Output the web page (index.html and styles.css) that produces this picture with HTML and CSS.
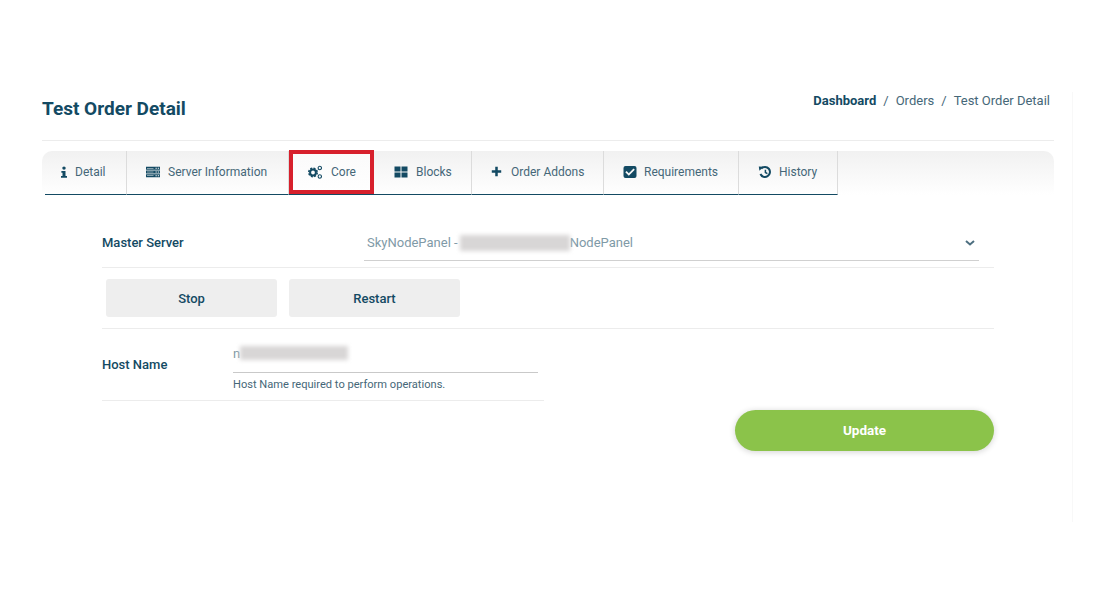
FILE: index.html
```html
<!DOCTYPE html>
<html lang="en">

<head>
    <meta charset="UTF-8">
    <title>Test Order Detail</title>
    <link rel="stylesheet" href="styles.css">
</head>

<body>
    <div class="content">
        <div class="page">
            <div class="page-header">
                <h1>Test Order Detail</h1>
                <div class="breadcrumb">
                    <a class="crumb-root">Dashboard</a>
                    <span class="sep">/</span>
                    <a>Orders</a>
                    <span class="sep">/</span>
                    <span>Test Order Detail</span>
                </div>
            </div>

            <div class="tabs-bar">
                <a class="tab tab-detail">
                    <svg class="icon" viewBox="3 0 10 16"><circle cx="8" cy="2.800" r="2.300"/><path d="M4.500 6.500h5.500v6.800h2v2.400h-8v-2.400h2v-4.400h-1.500z"/></svg>
                    Detail
                </a>
                <a class="tab tab-server">
                    <svg class="icon icon-wide" viewBox="0 0 14 14"><path d="M0 1.800h14v3h-14zM0 5.500h14v3h-14zM0 9.200h14v3h-14z"/><path class="cut" d="M9.500 2.800h1.300v1h-1.300zM11.800 2.800h1.300v1h-1.300zM1 3h6.500v.6h-6.500zM9.500 6.500h1.300v1h-1.300zM11.800 6.500h1.300v1h-1.300zM1 6.700h6.500v.6h-6.500zM9.500 10.200h1.300v1h-1.300zM11.800 10.200h1.300v1h-1.300zM1 10.400h6.500v.6h-6.500z"/></svg>
                    Server Information
                </a>
                <a class="tab tab-core">
                    <svg class="icon icon-wide" viewBox="0 0 14 14"><circle class="teeth" cx="5" cy="7.500" r="4.200"/><circle class="hub" cx="5" cy="7.500" r="2.900"/><circle class="small" cx="11.800" cy="3" r="1.700"/><circle class="small" cx="11.800" cy="11.500" r="1.700"/></svg>
                    Core
                </a>
                <a class="tab tab-blocks">
                    <svg class="icon icon-wide" viewBox="0 0 14 14"><path d="M.5 1.500h6v5h-6zM7.500 1.500h6v5h-6zM.5 7.500h6v5h-6zM7.500 7.500h6v5h-6z"/></svg>
                    Blocks
                </a>
                <a class="tab tab-addons">
                    <svg class="icon icon-plus" viewBox="0 0 14 14"><path d="M5.400 1h3.200v4.400h4.400v3.200h-4.400v4.400h-3.200v-4.400h-4.400v-3.200h4.400z"/></svg>
                    Order Addons
                </a>
                <a class="tab tab-req">
                    <svg class="icon icon-wide" viewBox="0 0 14 14"><path fill-rule="evenodd" d="M2.500 1h9a2 2 0 0 1 2 2v8a2 2 0 0 1-2 2h-9a2 2 0 0 1-2-2v-8a2 2 0 0 1 2-2zM5.800 10.800l6-6-1.300-1.300-4.700 4.700-2.200-2.200-1.300 1.300z"/></svg>
                    Requirements
                </a>
                <a class="tab tab-history">
                    <svg class="icon icon-wide" viewBox="0 0 14 14"><path class="line" d="M3.300 3.500a5 5 0 1 1-.9 5.500"/><path d="M.8 1.500l4.800.3-4.200 4z"/><path class="line thin" d="M7.400 4.700v2.800l2 1.100"/></svg>
                    History
                </a>
            </div>

            <form class="core-form">
                <div class="form-row row-server">
                    <label class="row-label">Master Server</label>
                    <div class="select-box">
                        <span class="select-text">SkyNodePanel - <span class="blur blur-server"></span>NodePanel</span>
                        <svg class="chevron" viewBox="0 0 10 6"><path d="M1 1l4 3.500 4-3.500"/></svg>
                    </div>
                </div>

                <div class="form-row row-actions">
                    <button type="button" class="btn-grey">Stop</button>
                    <button type="button" class="btn-grey">Restart</button>
                </div>

                <div class="form-row row-host">
                    <label class="row-label">Host Name</label>
                    <div class="host-field">
                        <div class="host-input">n<span class="blur blur-host"></span></div>
                        <small>Host Name required to perform operations.</small>
                    </div>
                </div>

                <div class="form-footer">
                    <button type="button" class="btn-update">Update</button>
                </div>
            </form>
        </div>
    </div>
</body>

</html>
```

FILE: styles.css
```css
:root {
    --navy: #134a63;
    --text: #456778;
    --line: #ececec;
}

* {
    box-sizing: border-box;
    margin: 0;
    padding: 0;
}

body {
    font-family: Roboto, "Liberation Sans", sans-serif;
    background: #fff;
    color: var(--text);
    font-size: 13px;
    height: 600px;
    overflow: hidden;
}

.content {
    width: 1073px;
    height: 430px;
    margin-top: 92px;
    border-right: 1px solid #f8f8f8;
}

.page {
    width: 1012px;
    margin-left: 42px;
}

.page-header {
    display: flex;
    justify-content: space-between;
    align-items: flex-start;
    width: 1012px;
    height: 49px;
    border-bottom: 1px solid var(--line);
}

h1 {
    font-size: 19px;
    line-height: 24px;
    font-weight: 700;
    color: var(--navy);
    margin-top: 5px;
}

.breadcrumb {
    display: flex;
    font-size: 13px;
    line-height: 16px;
    padding: 1px 4px 0 0;
}

.crumb-root {
    font-weight: 700;
    color: var(--navy);
}

.sep {
    margin: 0 7px;
}

.tabs-bar {
    display: flex;
    height: 44px;
    margin-top: 10px;
    padding-left: 3px;
    border-radius: 10px 10px 0 0;
    background: linear-gradient(#f1f1f1, #fff);
}

.tab {
    display: flex;
    align-items: center;
    height: 44px;
    padding: 0 0 2px 19px;
    font-size: 12px;
    color: var(--text);
    border-right: 1px solid #dcdcdc;
    border-bottom: 1px solid var(--navy);
}

.tab-detail { width: 82px; padding-left: 14px; }
.tab-server { width: 162px; }
.tab-core { width: 83px; }
.tab-blocks { width: 100px; padding-left: 22px; }
.tab-addons { width: 132px; }
.tab-req { width: 135px; }
.tab-history { width: 99px; }

.tab-core {
    position: relative;
    border-right: 0;
    background: linear-gradient(#fafafa, #fff);
}

/* red marker drawn on the screenshot */
.tab-core::after {
    content: "";
    position: absolute;
    left: 0;
    top: -1px;
    width: 77px;
    height: 36px;
    border: 4px solid #d7202c;
    pointer-events: none;
}

.icon {
    width: 10px;
    height: 12px;
    margin-right: 6px;
    flex-shrink: 0;
    fill: var(--navy);
    stroke: none;
}

.icon-wide {
    width: 14px;
    height: 14px;
    margin-right: 8px;
}

.icon-plus {
    width: 11px;
    height: 11px;
    margin-right: 9px;
}

.tab-core .icon-wide {
    margin-right: 9px;
}

.tab-req .icon-wide,
.tab-history .icon-wide {
    margin-right: 7px;
}

.tab-core circle {
    fill: none;
    stroke: var(--navy);
}

.tab-core .teeth {
    stroke-width: 1.600;
    stroke-dasharray: 2 1.300;
}

.tab-core .hub {
    stroke-width: 2;
}

.tab-core .small {
    stroke-width: 1.100;
}

.tab-server .cut {
    fill: #f7f7f7;
}

.icon .line {
    fill: none;
    stroke: var(--navy);
    stroke-width: 2;
}

.icon .thin {
    stroke-width: 1.500;
}

.core-form {
    width: 892px;
    margin-left: 60px;
    margin-top: 29px;
}

.form-row {
    display: flex;
    border-bottom: 1px solid var(--line);
}

.row-label {
    font-size: 13px;
    font-weight: 500;
    color: var(--navy);
}

.row-server {
    height: 44px;
    padding-top: 5px;
}

.row-server .row-label {
    width: 262px;
    line-height: 28px;
}

.select-box {
    display: flex;
    justify-content: space-between;
    align-items: center;
    width: 615px;
    height: 32px;
    padding: 0 4px 4px 3px;
    border-bottom: 1px solid #d0d0d0;
}

.select-text {
    display: flex;
    align-items: center;
    font-size: 13px;
    color: #7f9aa7;
}

.chevron {
    width: 10px;
    height: 6px;
    fill: none;
    stroke: #4d6f80;
    stroke-width: 2;
}

.blur {
    display: inline-block;
    background: #d8d6d6;
    filter: blur(2px);
}

.blur-server {
    width: 110px;
    height: 16px;
    margin-left: 2px;
}

.blur-host {
    width: 108px;
    height: 14px;
}

.row-actions {
    gap: 12px;
    height: 61px;
    padding: 11px 0 0 4px;
}

.btn-grey {
    width: 171px;
    height: 38px;
    font-family: inherit;
    font-size: 13px;
    font-weight: 500;
    color: var(--navy);
    background: #eeeeee;
    border: none;
    border-radius: 3px;
}

.row-host {
    width: 442px;
    height: 72px;
    padding-top: 13px;
}

.row-host .row-label {
    width: 131px;
    line-height: 45px;
}

.host-field {
    width: 305px;
}

.host-input {
    display: flex;
    align-items: center;
    height: 31px;
    padding-bottom: 8px;
    font-size: 13px;
    color: #7f9aa7;
    border-bottom: 1px solid #c9c9c9;
}

.host-field small {
    display: block;
    margin-top: 5px;
    font-size: 11.100px;
    line-height: 14px;
    color: var(--text);
}

.form-footer {
    display: flex;
    justify-content: flex-end;
    margin-top: 9px;
}

.btn-update {
    width: 259px;
    height: 41px;
    padding-bottom: 2px;
    font-family: inherit;
    font-size: 13.500px;
    font-weight: 700;
    color: #fff;
    background: #8bc34a;
    border: none;
    border-radius: 21px;
    box-shadow: 0 1px 6px rgba(0, 0, 0, 0.18);
}
```
